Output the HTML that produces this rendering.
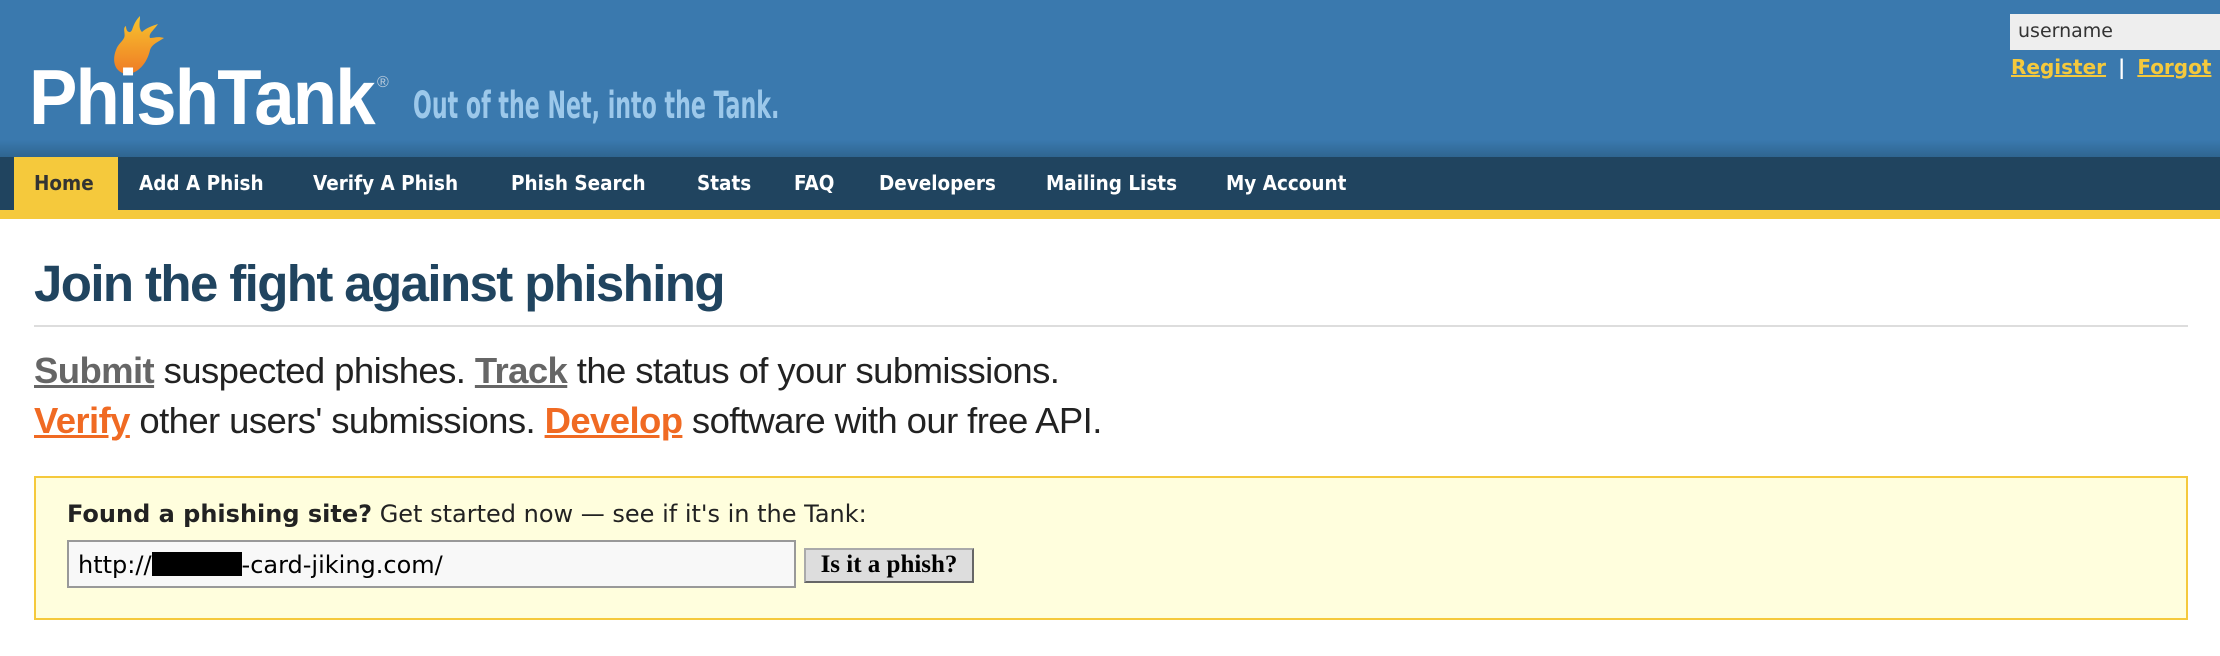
<!DOCTYPE html>
<html><head><meta charset="utf-8"><style>
*{margin:0;padding:0;box-sizing:border-box}
body{width:2220px;height:656px;overflow:hidden;background:#fff;font-family:"Liberation Sans",Arial,sans-serif;position:relative}
.hdr{position:absolute;left:0;top:0;width:2220px;height:157px;background:linear-gradient(#3a79ae 0,#3a79ae 140px,#2f6590 157px)}
.logo{position:absolute;left:29px;top:52px;font-weight:bold;font-size:78px;color:#fff;letter-spacing:-2px;transform:scaleX(0.93);transform-origin:left}
.reg{position:absolute;left:378px;top:72px;color:#bcd;font-size:16px}
.tag{position:absolute;left:413px;top:84px;color:#9cc8ea;font-size:37px;font-weight:bold;transform:scaleX(0.665);transform-origin:left;font-family:"DejaVu Sans Condensed","Liberation Sans Narrow",sans-serif}
.user{position:absolute;left:2010px;top:14px;width:220px;height:36px;background:#eee;font-family:"DejaVu Sans",sans-serif;font-size:19px;color:#333;padding:6px 8px}
.links{position:absolute;left:2011px;top:55px;font-family:"DejaVu Sans",sans-serif;font-weight:bold;font-size:20px;color:#f5c93c;white-space:nowrap}
.links a{color:#f5c93c;text-decoration:underline}
.links span{color:#fff;margin:0 12px}
.nav{position:absolute;left:0;top:157px;width:2220px;height:53px;background:#20445f}
.stripe{position:absolute;left:0;top:210px;width:2220px;height:9px;background:#f5c93c}
.nav div{position:absolute;top:0;height:53px;line-height:52px;color:#fff;font-weight:bold;font-size:20px;font-family:"DejaVu Sans",sans-serif;transform:scaleX(0.92);transform-origin:left;white-space:nowrap}
.home{position:absolute;left:14px;top:157px;width:104px;height:53px;background:#f5c93c}
h1{position:absolute;left:34px;top:254px;font-size:51px;color:#20445f;letter-spacing:-1.6px;font-weight:bold}
.hr{position:absolute;left:34px;top:325px;width:2154px;height:2px;background:#ddd}
.p{position:absolute;left:34px;font-size:36.5px;color:#222;white-space:nowrap;letter-spacing:-0.6px}
.p a{font-weight:bold;text-decoration:underline}
.g{color:#666}.o{color:#f06a23}
.box{position:absolute;left:34px;top:476px;width:2154px;height:144px;background:#fffedd;border:2px solid #f5c93c}
.found{position:absolute;left:67px;top:500px;font-family:"DejaVu Sans",sans-serif;font-size:24px;color:#222;white-space:nowrap}
.inp{position:absolute;left:67px;top:540px;width:729px;height:48px;background:#f8f8f8;border:2px solid #999;font-family:"DejaVu Sans",sans-serif;font-size:24px;padding:9px 9px;white-space:nowrap}
.inp i{display:inline-block;width:90px;height:24px;background:#000;vertical-align:-3px}
.btn{position:absolute;left:804px;top:548px;width:170px;height:35px;background:#ddd;border:2px solid;border-color:#aaa #666 #666 #aaa;font-family:"Liberation Serif",serif;font-weight:bold;font-size:25px;text-align:center;line-height:30px}
</style></head><body>
<div class="hdr">
<svg style="position:absolute;left:108px;top:14px" width="62" height="62" viewBox="0 0 62 62"><defs><linearGradient id="f" x1="0" y1="0" x2="0" y2="1"><stop offset="0" stop-color="#f7c42e"/><stop offset="1" stop-color="#ef7b25"/></linearGradient></defs><path d="M18 60 C6 58 4 46 8 36 C10 30 14 28 16 24 C18 20 14 14 18 12 C18 18 22 20 24 16 C26 10 28 6 32 2 C32 8 30 14 34 18 C38 14 44 12 50 10 C46 16 40 20 42 24 C46 24 50 22 56 24 C50 28 44 30 42 36 C40 46 32 60 18 60Z" fill="url(#f)"/></svg>
<div class="logo">PhishTank</div>
<div class="reg" style="left:377px;top:74px">®</div>
<div class="tag">Out of the Net, into the Tank.</div>
<div class="user">username</div>
<div class="links"><a>Register</a><span>|</span><a>Forgot</a></div>
</div>
<div class="nav">
<div style="left:139px">Add A Phish</div>
<div style="left:313px">Verify A Phish</div>
<div style="left:511px">Phish Search</div>
<div style="left:697px">Stats</div>
<div style="left:794px">FAQ</div>
<div style="left:879px">Developers</div>
<div style="left:1046px">Mailing Lists</div>
<div style="left:1226px">My Account</div>
</div>
<div class="home"></div>
<div class="nav" style="background:none"><div style="left:34px;color:#333">Home</div></div>
<div class="stripe"></div>
<h1>Join the fight against phishing</h1>
<div class="hr"></div>
<div class="p" style="top:350px"><a class="g">Submit</a> suspected phishes. <a class="g">Track</a> the status of your submissions.</div>
<div class="p" style="top:400px"><a class="o">Verify</a> other users' submissions. <a class="o">Develop</a> software with our free API.</div>
<div class="box"></div>
<div class="found"><b>Found a phishing site?</b> Get started now — see if it's in the Tank:</div>
<div class="inp">http://<i></i>-card-jiking.com/</div>
<div class="btn">Is it a phish?</div>
</body></html>
